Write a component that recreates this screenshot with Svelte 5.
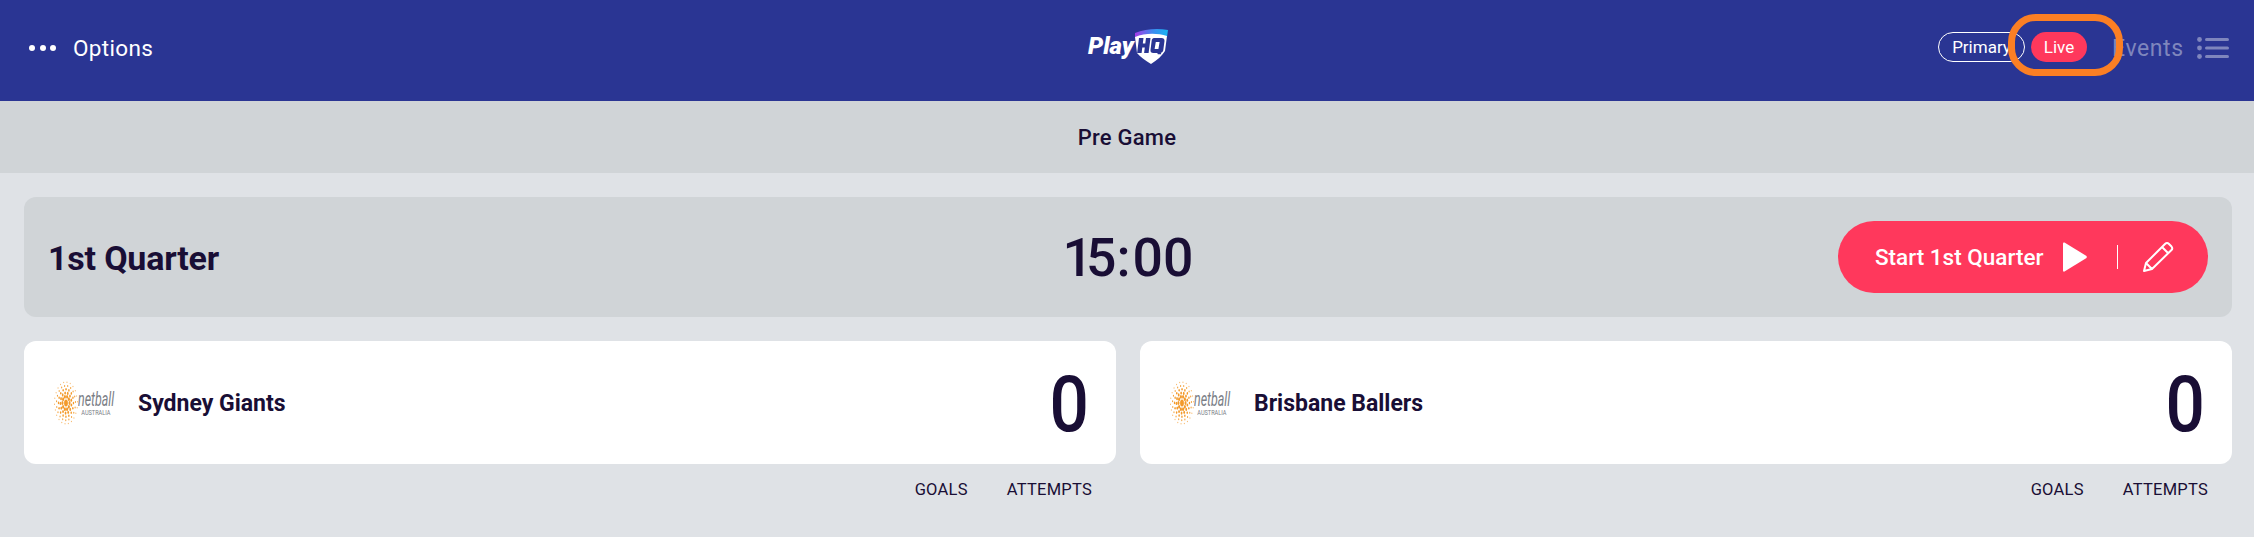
<script>
  const teams = ['Sydney Giants', 'Brisbane Ballers'];
  const rays = [];
  for (let r = 0; r < 5; r++) {
    const count = 10 + r * 3;
    for (let i = 0; i < count; i++) {
      const a = (i / count) * Math.PI * 2 + r * 0.2;
      rays.push({
        x: +(22 + Math.cos(a) * (6.5 + r * 3.6)).toFixed(1),
        y: +(22 + Math.sin(a) * (6.5 + r * 3.6)).toFixed(1),
        s: +(1.9 - r * 0.3).toFixed(2)
      });
    }
  }
</script>

<div class="page">
  <header class="top">
    <div class="options">
      <span class="dots"><i></i><i></i><i></i></span>
      <span>Options</span>
    </div>
    <div class="logo">
      <span class="play">Play</span>
      <svg class="shield" viewBox="0 0 36 37" width="36" height="37" aria-hidden="true">
        <defs>
          <linearGradient id="strip" x1="0" x2="1" y1="0" y2="0">
            <stop offset="0" stop-color="#a63be8" />
            <stop offset="0.55" stop-color="#3b8cf0" />
            <stop offset="1" stop-color="#17b4f2" />
          </linearGradient>
        </defs>
        <path d="M2 5 C12 1 24 0 35 2 L34 9 C24 5 12 6 2 10 Z" fill="url(#strip)" />
        <path d="M2 9 C12 5 24 5 34 8 L32 23 C29 28 24 32 18 36 C12 32 7 29 4 25 Z" fill="#fff" />
        <path d="M6 10 h4.500 l-.7 5.500 h2.500 l.7 -5.500 h4.500 l-1.900 15 h-4.500 l.7 -5.500 h-2.500 l-.7 5.500 h-4.500 Z" fill="#2a3593" />
        <path fill-rule="evenodd" d="M21 10 h7.500 c2 0 3.200 1 3 3 l-1.200 9 c-.2 1.500 -1 2.500 -2.500 2.800 l.5 1.500 h-3.500 l-.5 -1.300 h-4 c-2 0 -3 -1 -2.800 -3 l1.200 -9.500 c.2 -1.600 1 -2.500 2.300 -2.500 Z M22.800 14 l-1.200 7 h3.800 l1.200 -7 Z" fill="#2a3593" />
      </svg>
    </div>
    <div class="right">
      <span class="pill primary">Primary</span>
      <span class="pill live">Live</span>
      <span class="events">Events</span>
      <svg class="list" viewBox="0 0 32 22" width="32" height="22" aria-hidden="true">
        <circle cx="2.500" cy="2.500" r="2.400" />
        <circle cx="2.500" cy="11" r="2.400" />
        <circle cx="2.500" cy="19.500" r="2.400" />
        <rect x="8" y="1" width="24" height="3" rx="1.500" />
        <rect x="8" y="9.500" width="24" height="3" rx="1.500" />
        <rect x="8" y="18" width="24" height="3" rx="1.500" />
      </svg>
    </div>
    <span class="highlight"></span>
  </header>

  <div class="status">Pre Game</div>

  <main class="content">
    <section class="clock">
      <h1>1st Quarter</h1>
      <div class="time"><span class="one">1</span>5<span class="colon">:</span>00</div>
      <div class="start">
        <span class="start-label">Start 1st Quarter</span>
        <svg viewBox="0 0 24 30" width="24" height="30" aria-hidden="true">
          <path d="M1.500 .5 L23.500 14 Q24 15 23.500 16 L1.500 29.500 Q0 30 0 28.500 L0 1.500 Q0 0 1.500 .5 Z" fill="#fff" />
        </svg>
        <span class="sep"></span>
        <svg class="pencil" viewBox="0 0 32 32" width="32" height="32" aria-hidden="true">
          <path d="M2 30 L4 22 L23 3 Q25 1 27 3 L29.500 5.500 Q31 7.500 29.500 9 L10 28 Z M4 22 L10 28 M20 6 L26 12" fill="none" stroke="#fff" stroke-width="2" stroke-linejoin="round" />
        </svg>
      </div>
    </section>

    <section class="teams">
      {#each teams as team}
        <div class="team">
          <div class="card">
            <div class="netball">
              <svg viewBox="0 0 44 44" width="24" height="44" preserveAspectRatio="none" aria-hidden="true">
                <circle cx="22" cy="22" r="3.500" fill="#f39a2b" />
                {#each rays as d}
                  <circle cx={d.x} cy={d.y} r={d.s} fill="#f39a2b" />
                {/each}
              </svg>
              <div class="nb-text">
                <span class="nb-name">netball</span>
                <span class="nb-sub">AUSTRALIA</span>
              </div>
            </div>
            <span class="name">{team}</span>
            <span class="score">0</span>
          </div>
          <div class="labels">
            <span>GOALS</span>
            <span>ATTEMPTS</span>
          </div>
        </div>
      {/each}
    </section>
  </main>
</div>

<style>
  :global(body) {
    margin: 0;
    background: #dfe2e6;
  }
  .page {
    height: 537px;
    background: #dfe2e6;
    font-family: Roboto, "Liberation Sans", sans-serif;
    color: #190e35;
    overflow: hidden;
  }
  .top {
    position: relative;
    height: 101px;
    background: #2a3593;
    color: #fff;
    display: flex;
    align-items: center;
    justify-content: space-between;
    padding: 0 25px 5px 29px;
    box-sizing: border-box;
  }
  .options {
    display: flex;
    align-items: center;
    gap: 17px;
    font-size: 22.500px;
    letter-spacing: 0.35px;
    width: 300px;
  }
  .dots {
    display: flex;
    gap: 4.500px;
  }
  .dots i {
    width: 6px;
    height: 6px;
    border-radius: 50%;
    background: #fff;
  }
  .logo {
    display: flex;
    align-items: flex-end;
    position: absolute;
    left: 1088px;
    top: 28px;
    height: 37px;
  }
  .play {
    font-size: 24px;
    line-height: 28px;
    font-weight: 900;
    font-style: italic;
    position: relative;
    top: -5px;
    width: 45px;
  }
  .right {
    display: flex;
    align-items: center;
    font-size: 17px;
  }
  .pill {
    height: 30px;
    box-sizing: border-box;
    border-radius: 15px;
    display: flex;
    align-items: center;
    justify-content: center;
    white-space: nowrap;
    transform: translateY(-1px);
  }
  .primary {
    width: 87px;
    border: 1px solid #fff;
  }
  .live {
    width: 56px;
    margin-left: 6px;
    background: #ff385c;
  }
  .events {
    margin-left: 25px;
    font-size: 23px;
    color: #7f86bd;
    letter-spacing: 0.6px;
    width: 70px;
  }
  .list {
    margin-left: 15px;
    fill: #7f86bd;
  }
  .highlight {
    position: absolute;
    left: 2008px;
    top: 14px;
    width: 115px;
    height: 62px;
    box-sizing: border-box;
    border: 7px solid #fb7f24;
    border-radius: 28px;
  }
  .status {
    height: 72px;
    background: #d0d4d7;
    display: flex;
    align-items: center;
    justify-content: center;
    font-size: 22px;
    font-weight: 500;
    letter-spacing: 0.2px;
  }
  .content {
    padding: 24px 22px 0 24px;
  }
  .clock {
    height: 120px;
    background: #d0d4d7;
    border-radius: 12px;
    display: grid;
    grid-template-columns: 1fr auto 1fr;
    align-items: center;
    padding: 0 24px;
  }
  h1 {
    margin: 0;
    padding-top: 2px;
    font-size: 34px;
    font-weight: 700;
    letter-spacing: -0.2px;
  }
  .time {
    font-size: 53.500px;
    font-weight: 500;
    white-space: nowrap;
  }
  .one {
    letter-spacing: -7px;
  }
  .colon {
    letter-spacing: 2px;
  }
  .start {
    justify-self: end;
    width: 370px;
    height: 72px;
    box-sizing: border-box;
    border-radius: 36px;
    background: #ff385c;
    color: #fff;
    display: flex;
    align-items: center;
    padding-left: 37px;
  }
  .start-label {
    font-size: 22.500px;
    font-weight: 500;
    width: 188px;
    white-space: nowrap;
  }
  .sep {
    width: 1px;
    height: 24px;
    background: #fff;
    margin: 0 24px 0 30px;
  }
  .teams {
    display: grid;
    grid-template-columns: 1fr 1fr;
    gap: 24px;
    margin-top: 24px;
  }
  .card {
    height: 123px;
    background: #fff;
    border-radius: 12px;
    display: flex;
    align-items: center;
    padding: 0 27px 0 30px;
  }
  .netball {
    display: flex;
    align-items: center;
    width: 84px;
    flex: none;
  }
  .netball svg {
    flex: none;
  }
  .nb-text {
    width: 36px;
    display: flex;
    flex-direction: column;
    align-items: center;
    color: #7a7e86;
    line-height: 1;
    white-space: nowrap;
  }
  .nb-name {
    font-size: 20px;
    font-style: italic;
    transform: scaleX(0.62);
  }
  .nb-sub {
    font-size: 8px;
    transform: scaleX(0.7);
  }
  .name {
    padding-top: 2px;
    font-size: 23px;
    font-weight: 700;
  }
  .score {
    margin-left: auto;
    padding-top: 5px;
    font-size: 77px;
    font-weight: 500;
    line-height: 1;
    transform: scaleX(0.9);
    transform-origin: right center;
  }
  .labels {
    display: flex;
    justify-content: flex-end;
    gap: 39px;
    padding: 16px 24px 0 0;
    font-size: 16.500px;
    line-height: 19px;
    letter-spacing: 0.25px;
  }
</style>
